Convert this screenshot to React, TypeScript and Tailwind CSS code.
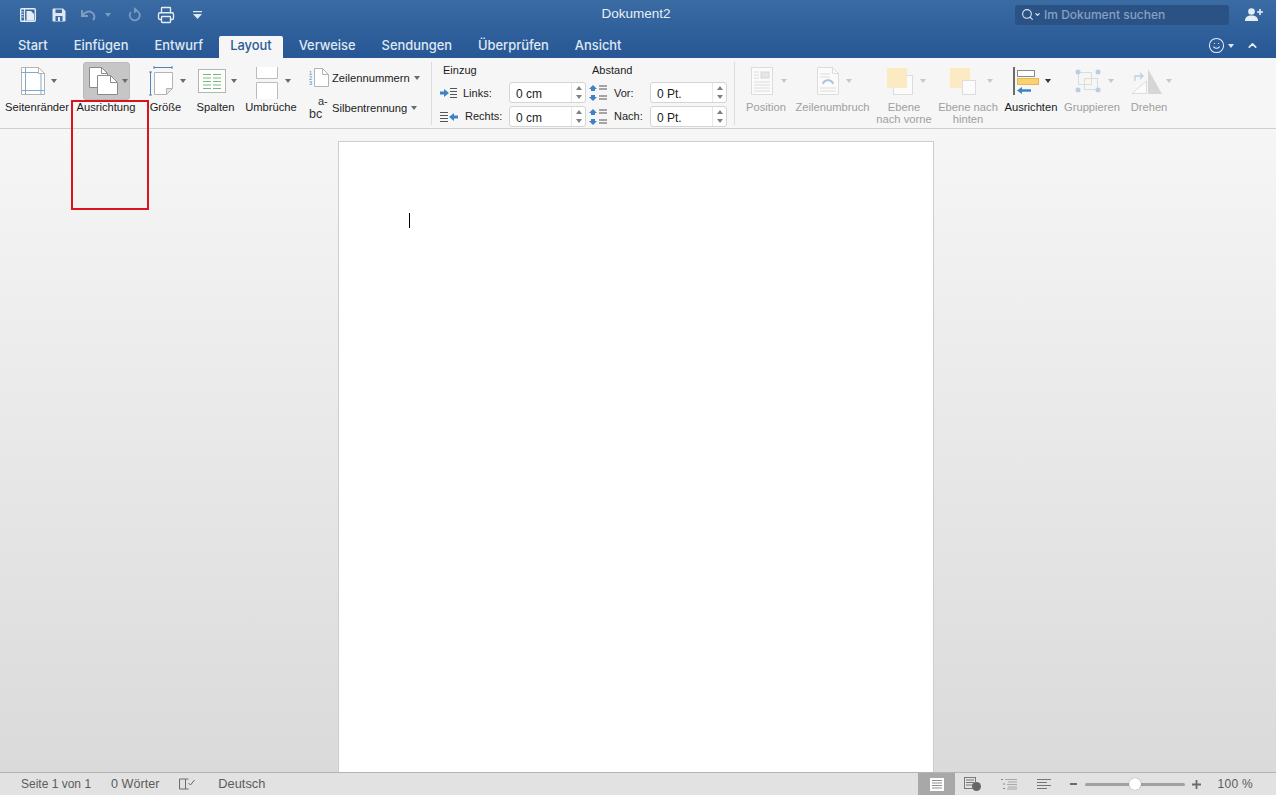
import React from "react";
import { ChevronDown, ChevronUp, Search, Smile, Printer } from "lucide-react";

const Caret = ({ className = "", color = "#6b6b6b" }: { className?: string; color?: string }) => (
  <svg width="6" height="4" viewBox="0 0 6 4" className={className}>
    <path d="M0 0h6L3 4z" fill={color} />
  </svg>
);

const Col = ({ label, width, left, dim, children }: { label: React.ReactNode; width: string; left: string; dim?: boolean; children: React.ReactNode }) => (
  <div className={`flex flex-col shrink-0 ${width} ${dim ? "text-[#a0a0a0]" : "text-[#1c1c1c]"}`}>
    <div className={`flex items-center h-[38px] ${left}`}>{children}</div>
    <div className="mt-[1px] text-center text-[11.2px] leading-[12px] whitespace-nowrap">{label}</div>
  </div>
);

const Spinner = ({ value }: { value: string }) => (
  <div className="flex w-[77px] h-[21px] shrink-0 bg-white border border-[#d4d4d4] rounded-[3px] text-[12px] text-[#1c1c1c]">
    <span className="flex-1 pl-[6px] pt-[3px] leading-[16px]">{value}</span>
    <span className="flex flex-col items-center justify-center gap-[5px] w-[14px] border-l border-[#e8e8e8]">
      <svg width="6" height="4" viewBox="0 0 6 4"><path d="M3 0l3 4H0z" fill="#808080" /></svg>
      <Caret color="#808080" />
    </span>
  </div>
);

const Lines = ({ x, y, w = 8, n = 3, step = 2.5, color = "#555" }: { x: number; y: number; w?: number; n?: number; step?: number; color?: string }) => (
  <g stroke={color} strokeWidth="1">
    {Array.from({ length: n }).map((_, i) => (
      <path key={i} d={`M${x} ${y + i * step}h${w}`} />
    ))}
  </g>
);

const Tab = ({ children }: { children: React.ReactNode }) => (
  <span className="h-[22px] px-[13px] leading-[20px] font-['Inter',sans-serif] text-[12.9px] font-medium text-[#dfe8f3]">{children}</span>
);

export default function App() {
  return (
    <div className="relative flex flex-col h-screen w-full overflow-hidden font-['Liberation_Sans',sans-serif] bg-[#f0f0f0]">
      {/* title bar + tabs */}
      <div className="bg-gradient-to-b from-[#3a6ba3] to-[#275794] h-[58px] shrink-0">
        <div className="grid grid-cols-3 items-center h-[36px] pb-[7px]">
          <div className="flex items-center pl-[20px]">
            <svg width="16" height="14" viewBox="0 0 16 14" fill="none">
              <rect x="0.700" y="0.700" width="14.600" height="12.600" rx="1" stroke="#e6edf5" strokeWidth="1.400" />
              <path d="M4.500 1v12" stroke="#e6edf5" strokeWidth="1.200" />
              <path d="M6.500 3h4.500l3 3v6.500H6.500z" fill="#e6edf5" />
              <path d="M1.500 4h2M1.500 6.500h2M1.500 9h2" stroke="#e6edf5" />
            </svg>
            <svg width="14" height="14" viewBox="0 0 14 14" className="ml-[16px]">
              <path d="M1.500 0.500h9.500l2.500 2.500v9.500a1 1 0 0 1-1 1h-11a1 1 0 0 1-1-1v-11a1 1 0 0 1 1-1z" fill="#dfe8f3" />
              <rect x="3.500" y="1.500" width="6.500" height="3.500" fill="#3a6ba3" />
              <rect x="3.500" y="8" width="7" height="5" fill="#3a6ba3" />
              <rect x="6" y="9" width="2" height="4" fill="#dfe8f3" />
            </svg>
            <svg width="16" height="12" viewBox="0 0 16 12" fill="none" className="ml-[15px]">
              <path d="M1 1v6h6" stroke="#7d9cc2" strokeWidth="2" />
              <path d="M1.500 6.500C3.500 3 8 1.500 11 3.500c3 2 3 5.500 1 7.500" stroke="#7d9cc2" strokeWidth="2" />
            </svg>
            <Caret color="#7d9cc2" className="ml-[8px]" />
            <svg width="13" height="15" viewBox="0 0 13 15" fill="none" className="ml-[17px]">
              <path d="M8 3.500A5 5 0 1 1 3 5" stroke="#7d9cc2" strokeWidth="1.800" />
              <path d="M6 0l4 3.500-4 3z" fill="#7d9cc2" />
            </svg>
            <Printer size={18} color="#e6edf5" strokeWidth={1.800} className="ml-[16px]" />
            <svg width="9" height="8" viewBox="0 0 9 8" className="ml-[18px]">
              <path d="M0 0h9v1.300H0z M0 3h9L4.500 8z" fill="#dfe8f3" />
            </svg>
          </div>
          <div className="text-center text-[13.500px] text-[#e8eef6] pr-[4px]">Dokument2</div>
          <div className="flex items-center justify-end">
            <div className="flex items-center w-[214px] h-[20px] pl-[6px] bg-[#2b5285] rounded-[3px] font-['Inter',sans-serif] text-[12px] font-medium text-[#86a0c0]">
              <Search size={13} color="#dfe8f3" strokeWidth={2} />
              <ChevronDown size={7} color="#dfe8f3" strokeWidth={4} className="mr-[3px]" />
              Im Dokument suchen
            </div>
            <svg width="18" height="13" viewBox="0 0 18 13" className="ml-[16px] mr-[13px]">
              <circle cx="6.500" cy="3.500" r="3.300" fill="#e6edf5" />
              <path d="M0 13c0-4 2.500-5.500 6.500-5.500S13 9 13 13z" fill="#e6edf5" />
              <path d="M12 4h6M15 1v6" stroke="#e6edf5" strokeWidth="1.600" />
            </svg>
          </div>
        </div>
        <div className="flex items-end h-[22px] pl-[5px]">
          <Tab>Start</Tab>
          <Tab>Einfügen</Tab>
          <Tab>Entwurf</Tab>
          <span className="mx-[3px] px-[11px] h-[22px] leading-[20px] bg-[#f6f6f6] rounded-t-[2px] font-['Inter',sans-serif] text-[12.9px] font-medium text-[#2b5b97]">Layout</span>
          <Tab>Verweise</Tab>
          <Tab>Sendungen</Tab>
          <Tab>Überprüfen</Tab>
          <Tab>Ansicht</Tab>
          <div className="flex items-center ml-auto mr-[17px] mb-[4px]">
            <Smile size={17} color="#e6edf5" strokeWidth={1.500} />
            <Caret color="#dfe8f3" className="ml-[3px]" />
            <ChevronUp size={13} color="#e6edf5" strokeWidth={3} className="ml-[12px]" />
          </div>
        </div>
      </div>

      {/* ribbon */}
      <div className="flex items-start h-[71px] shrink-0 bg-[#f6f6f6] border-b border-[#cfcfcf]">
        <div className="flex pt-[4px]">
          <Col label="Seitenränder" width="w-[74px]" left="pl-[21px]">
            <svg width="24" height="28" viewBox="0 0 24 28" fill="none">
              <path d="M0.500 0.500h17l6 6v21h-23z" fill="#fff" stroke="#b4b4b4" />
              <path d="M17.500 0.500v6h6" stroke="#b4b4b4" />
              <path d="M4.500 0.500v27M20 6v21.500M0.500 5.500h17M0.500 23.500h23" stroke="#7fa9cf" />
            </svg>
            <Caret className="ml-[6px]" />
          </Col>
          <Col label="Ausrichtung" width="w-[64px]" left="">
            <div className="flex items-center ml-[9px] w-[47px] h-[38px] pl-[5px] bg-[#c6c6c6] border border-[#bababa] rounded-[3px]">
              <svg width="29" height="28" viewBox="0 0 29 28" fill="none" className="shrink-0">
                <path d="M0.500 0.500h12l6 6v14h-18z" fill="#fff" stroke="#8a8a8a" />
                <path d="M12.500 0.500v6h6" stroke="#8a8a8a" />
                <path d="M8.500 8.500h13l7 7v12h-20z" fill="#fff" stroke="#8a8a8a" />
                <path d="M21.500 8.500v7h7" stroke="#8a8a8a" />
              </svg>
              <Caret className="ml-[4px] shrink-0" />
            </div>
          </Col>
          <Col label="Größe" width="w-[55px]" left="pl-[11px]">
            <svg width="24" height="30" viewBox="0 0 24 30" fill="none">
              <path d="M5.500 6.500h18v16l-6 6h-12z" fill="#fff" stroke="#b4b4b4" />
              <path d="M23.500 22.500h-6v6z" fill="#e4e4e4" stroke="#b4b4b4" />
              <path d="M5 1.500h18M5 0v3M23 0v3" stroke="#4c86b8" />
              <path d="M1.500 6v23M0 6h3M0 29h3" stroke="#4c86b8" />
            </svg>
            <Caret className="ml-[7px]" />
          </Col>
          <Col label="Spalten" width="w-[45px]" left="pl-[5px]">
            <svg width="28" height="24" viewBox="0 0 28 24" fill="none" className="shrink-0">
              <rect x="0.500" y="0.500" width="27" height="23" fill="#fff" stroke="#b4b4b4" />
              <Lines x={5} y={5.500} w={8} n={5} step={3.500} color="#73bb7a" />
              <Lines x={15} y={5.500} w={8} n={5} step={3.500} color="#73bb7a" />
            </svg>
            <Caret className="ml-[5px] shrink-0" />
          </Col>
          <Col label="Umbrüche" width="w-[66px]" left="pl-[18px]">
            <svg width="22" height="32" viewBox="0 0 22 32" fill="none" className="mt-[3px]">
              <path d="M0.500 0v11.500h21V0" fill="#fff" stroke="#bcbcbc" />
              <path d="M0.500 32V15.500h21V32" fill="#fff" stroke="#bcbcbc" />
            </svg>
            <Caret className="ml-[7px]" />
          </Col>
        </div>

        <div className="flex flex-col w-[127px] pt-[10px] shrink-0 text-[11.200px] text-[#1c1c1c]">
          <div className="flex items-center h-[20px] pl-[5px]">
            <svg width="20" height="20" viewBox="0 0 20 20" fill="none" className="shrink-0">
              <path d="M5.500 0.500h8l6 6v12h-14z" fill="#fff" stroke="#b4b4b4" />
              <path d="M13.500 0.500v6h6" stroke="#b4b4b4" />
              <text x="0" y="7" fontSize="5.500" fill="#4c86b8">1</text>
              <text x="0" y="12" fontSize="5.500" fill="#4c86b8">2</text>
              <text x="0" y="17" fontSize="5.500" fill="#4c86b8">3</text>
            </svg>
            <span className="ml-[3px]">Zeilennummern</span>
            <Caret className="ml-[4px]" />
          </div>
          <div className="flex items-center h-[22px] mt-[9px] pl-[5px]">
            <svg width="20" height="24" viewBox="0 0 20 24" className="shrink-0">
              <text x="9" y="9" fontSize="11" fill="#333">a-</text>
              <text x="0" y="22" fontSize="12.500" fill="#333">bc</text>
            </svg>
            <span className="ml-[3px]">Silbentrennung</span>
            <Caret className="ml-[4px]" />
          </div>
        </div>

        <div className="flex w-[304px] h-[63px] mt-[4px] shrink-0 border-x border-[#dcdcdc] text-[11px] text-[#1c1c1c]">
          <div className="flex flex-col w-[154px]">
            <div className="h-[14px] mt-[1px] mb-[5px] pl-[11px] leading-[14px]">Einzug</div>
            <div className="flex items-center h-[21px] pl-[8px]">
              <svg width="18" height="12" viewBox="0 0 18 12" fill="none" className="shrink-0">
                <path d="M0 4.500h4V2l5 4-5 4V7.500H0z" fill="#3c82c4" />
                <Lines x={10} y={1.500} w={7} n={4} step={3} />
              </svg>
              <span className="w-[51px] pl-[5px] pt-[1px]">Links:</span>
              <Spinner value="0 cm" />
            </div>
            <div className="flex items-center h-[21px] mt-[3px] pl-[8px]">
              <svg width="18" height="12" viewBox="0 0 18 12" fill="none" className="shrink-0">
                <Lines x={0} y={1.500} w={8} n={4} step={3} />
                <path d="M18 4.500h-4V2L9 6l5 4V7.500h4z" fill="#3c82c4" />
              </svg>
              <span className="w-[51px] pl-[7px]">Rechts:</span>
              <Spinner value="0 cm" />
            </div>
          </div>
          <div className="flex flex-col">
            <div className="h-[14px] mt-[1px] mb-[5px] pl-[6px] leading-[14px]">Abstand</div>
            <div className="flex items-center h-[21px] pl-[3px]">
              <svg width="18" height="18" viewBox="0 0 18 18" fill="none" className="shrink-0">
                <path d="M4 1l4 4H6v2H2V5H0z" fill="#3c82c4" />
                <path d="M4 17l4-4H6v-2H2v2H0z" fill="#3c82c4" />
                <Lines x={10} y={2} w={8} n={2} step={3} />
                <Lines x={10} y={12} w={8} n={2} step={3} />
              </svg>
              <span className="w-[43px] pl-[7px] pt-[1px]">Vor:</span>
              <Spinner value="0 Pt." />
            </div>
            <div className="flex items-center h-[21px] mt-[3px] pl-[3px]">
              <svg width="18" height="18" viewBox="0 0 18 18" fill="none" className="shrink-0">
                <path d="M4 1l4 4H6v2H2V5H0z" fill="#3c82c4" />
                <path d="M4 17l4-4H6v-2H2v2H0z" fill="#3c82c4" />
                <Lines x={10} y={2} w={8} n={2} step={3} />
                <Lines x={10} y={12} w={8} n={2} step={3} />
              </svg>
              <span className="w-[43px] pl-[7px]">Nach:</span>
              <Spinner value="0 Pt." />
            </div>
          </div>
        </div>

        <div className="flex pt-[4px] ml-[3px]">
          <Col label="Position" width="w-[56px]" dim left="pl-[13px]">
            <svg width="22" height="28" viewBox="0 0 22 28" fill="none" className="shrink-0">
              <rect x="0.500" y="0.500" width="21" height="27" fill="#fbfbfb" stroke="#dcdcdc" />
              <rect x="10" y="5" width="8" height="6" fill="#e6e6e6" stroke="#d8d8d8" />
              <Lines x={3} y={5} w={5} n={3} step={3} color="#dcdcdc" />
              <Lines x={3} y={15} w={16} n={4} step={3} color="#dcdcdc" />
            </svg>
            <Caret color="#c8c8c8" className="ml-[8px] shrink-0" />
          </Col>
          <Col label="Zeilenumbruch" width="w-[77px]" dim left="pl-[23px]">
            <svg width="22" height="28" viewBox="0 0 22 28" fill="none" className="shrink-0">
              <path d="M0.500 0.500h15l6 6v21h-21z" fill="#fbfbfb" stroke="#dcdcdc" />
              <path d="M15.500 0.500v6h6" stroke="#dcdcdc" />
              <Lines x={3} y={7} w={10} n={2} step={3} color="#dcdcdc" />
              <path d="M6 17c1-5 9-5 10 0" stroke="#a9c4dc" strokeWidth="2" />
              <Lines x={3} y={21} w={16} n={2} step={3} color="#dcdcdc" />
            </svg>
            <Caret color="#c8c8c8" className="ml-[7px] shrink-0" />
          </Col>
          <Col label={<>Ebene<br />nach vorne</>} width="w-[66px]" dim left="pl-[16px]">
            <svg width="26" height="27" viewBox="0 0 26 27" fill="none" className="shrink-0">
              <rect x="6.500" y="7.500" width="19" height="19" fill="#fbfbfb" stroke="#dcdcdc" />
              <rect x="0" y="0" width="20" height="20" fill="#fbeac2" />
            </svg>
            <Caret color="#c8c8c8" className="ml-[7px] shrink-0" />
          </Col>
          <Col label={<>Ebene nach<br />hinten</>} width="w-[62px]" dim left="pl-[13px]">
            <svg width="26" height="27" viewBox="0 0 26 27" fill="none" className="shrink-0">
              <rect x="0" y="0" width="20" height="20" fill="#fbeac2" />
              <rect x="12.500" y="12.500" width="13" height="14" fill="#fbfbfb" stroke="#dcdcdc" />
            </svg>
            <Caret color="#c8c8c8" className="ml-[11px] shrink-0" />
          </Col>
          <Col label="Ausrichten" width="w-[64px]" left="pl-[14px]">
            <svg width="26" height="28" viewBox="0 0 26 28" fill="none" className="shrink-0">
              <path d="M1 0v28" stroke="#6b6b6b" strokeWidth="2" />
              <rect x="4.500" y="3.500" width="17" height="6" fill="#fff" stroke="#8a8a8a" />
              <rect x="4.500" y="11.500" width="21" height="6" fill="#fbd06f" stroke="#e5b85a" />
              <path d="M4 23.500l5-3.500v2.300h9v2.400H9V27z" fill="#3c82c4" />
            </svg>
            <Caret color="#333" className="ml-[6px] shrink-0" />
          </Col>
          <Col label="Gruppieren" width="w-[58px]" dim left="pl-[12px]">
            <svg width="26" height="24" viewBox="0 0 26 24" fill="none" className="shrink-0">
              <rect x="3.500" y="3.500" width="13" height="12" stroke="#dcdcdc" />
              <rect x="9.500" y="9.500" width="13" height="11" stroke="#dcdcdc" />
              <g fill="#b8cfe3">
                <circle cx="3" cy="3" r="2.500" /><circle cx="23" cy="3" r="2.500" />
                <circle cx="3" cy="21" r="2.500" /><circle cx="23" cy="21" r="2.500" />
              </g>
            </svg>
            <Caret color="#c8c8c8" className="ml-[7px] shrink-0" />
          </Col>
          <Col label="Drehen" width="w-[56px]" dim left="pl-[10px]">
            <svg width="32" height="25" viewBox="0 0 32 25" fill="none" className="shrink-0">
              <path d="M17 25V0l14 25z" fill="#d6d6d6" />
              <path d="M15.500 12v12.500H1z" fill="#fbfbfb" stroke="#dcdcdc" />
              <path d="M4 12V7h7M9 4l3 3-3 3" stroke="#b8cfe3" strokeWidth="1.300" />
            </svg>
            <Caret color="#c8c8c8" className="ml-[3px] shrink-0" />
          </Col>
        </div>
      </div>

      {/* document area */}
      <div className="flex flex-1 justify-center min-h-0 pt-[12px] pr-[4px] bg-gradient-to-b from-[#f6f6f6] to-[#dadada]">
        <div className="w-[596px] bg-white border-x border-t border-[#cdcdcd] pt-[71px] pl-[70px]">
          <div className="w-px h-[15px] bg-black" />
        </div>
      </div>

      {/* status bar */}
      <div className="flex items-center h-[23px] shrink-0 bg-[#e2e2e2] border-t border-[#b4b4b4] text-[12px] text-[#5c5c5c]">
        <span className="ml-[21px]">Seite 1 von 1</span>
        <span className="ml-[20px] text-[12.600px]">0 Wörter</span>
        <svg width="16" height="12" viewBox="0 0 16 12" fill="none" className="ml-[20px]">
          <path d="M0.500 1h6v10h-6zM6.500 1h3M6.500 11h3" stroke="#6b6b6b" />
          <path d="M9.500 5l2 2 4-5" stroke="#6b6b6b" />
        </svg>
        <span className="ml-[23px] text-[12.800px]">Deutsch</span>
        <div className="flex items-center justify-center ml-auto w-[37px] h-full bg-[#a8a8a8]">
          <svg width="14" height="13" viewBox="0 0 14 13" fill="none">
            <rect x="0.500" y="0.500" width="13" height="12" fill="#fff" stroke="#fff" />
            <Lines x={2} y={2.500} w={10} n={4} step={2.500} color="#909090" />
          </svg>
        </div>
        <svg width="17" height="14" viewBox="0 0 17 14" fill="none" className="ml-[9px]">
          <rect x="0.500" y="0.500" width="11" height="11" stroke="#777" />
          <Lines x={2} y={3} w={8} n={3} step={2.500} color="#777" />
          <circle cx="12.500" cy="9.500" r="4.500" fill="#666" />
        </svg>
        <svg width="16" height="12" viewBox="0 0 16 12" fill="none" className="ml-[20px]">
          <path d="M0 1.500h2M2 6h2M2 10.500h2" stroke="#888" />
          <path d="M4 1.500h12M7 4h9M6 6.500h10M7 9h9M6 11h10" stroke="#999" strokeWidth="0.800" />
        </svg>
        <svg width="14" height="12" viewBox="0 0 14 12" fill="none" className="ml-[20px]">
          <path d="M0 1.500h14M0 4.500h10M0 7.500h14M0 10.500h10" stroke="#777" />
        </svg>
        <div className="w-[7px] h-[2px] ml-[19px] bg-[#6b6b6b]" />
        <div className="flex items-center w-[100px] h-[3px] ml-[8px] rounded-full bg-[#a0a0a0]">
          <div className="w-[12px] h-[12px] ml-[44px] rounded-full bg-white shadow-[0_0_1px_#777]" />
        </div>
        <svg width="9" height="9" viewBox="0 0 9 9" className="ml-[7px]">
          <path d="M0 4.500h9M4.500 0v9" stroke="#6b6b6b" strokeWidth="1.800" />
        </svg>
        <span className="ml-[16px] mr-[23px] tracking-[0.3px]">100 %</span>
      </div>

      {/* red annotation */}
      <div className="absolute left-[71px] top-[100px] w-[78px] h-[110px] border-2 border-[#d9141c]" />
    </div>
  );
}
